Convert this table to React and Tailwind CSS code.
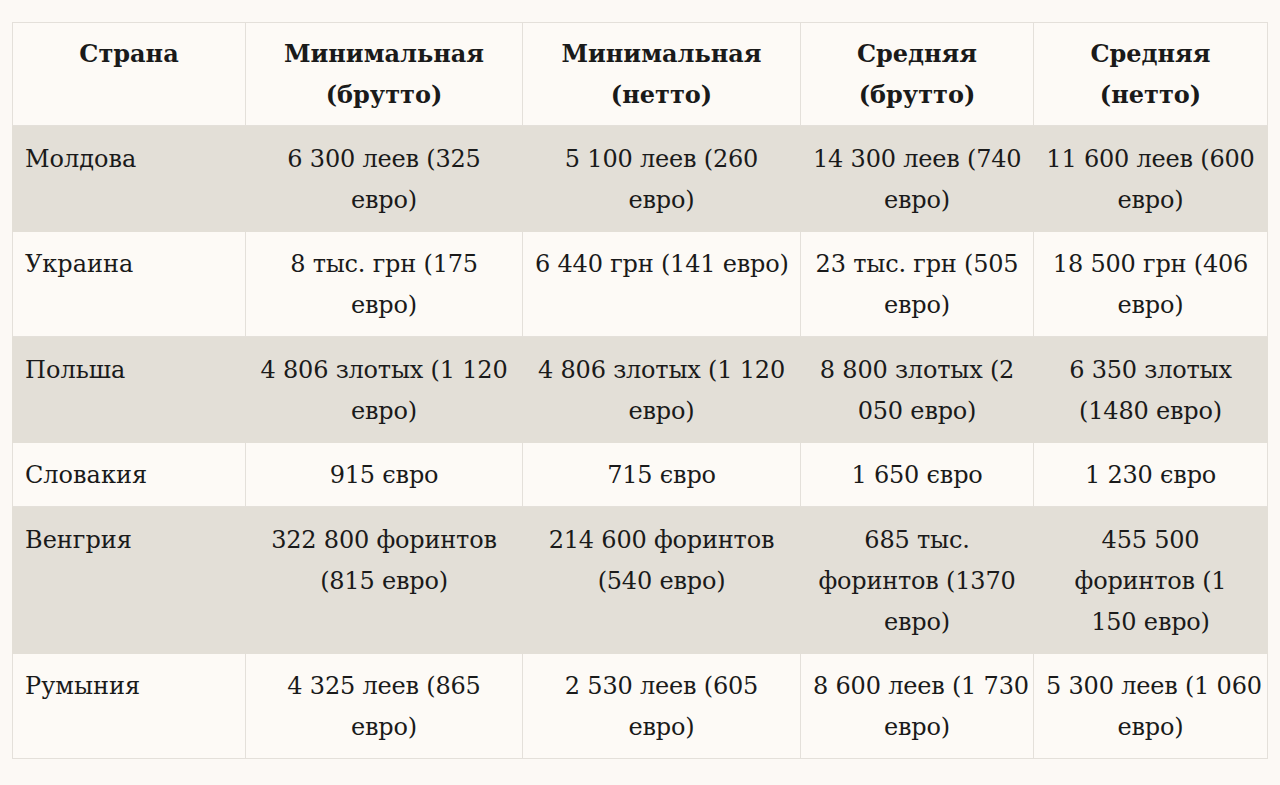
import React from 'react';

const headers = [
  ['Страна'],
  ['Минимальная', '(брутто)'],
  ['Минимальная', '(нетто)'],
  ['Средняя', '(брутто)'],
  ['Средняя', '(нетто)'],
];

const rows = [
  {
    country: 'Молдова',
    cells: [
      ['6 300 леев (325', 'евро)'],
      ['5 100 леев (260', 'евро)'],
      ['14 300 леев (740', 'евро)'],
      ['11 600 леев (600', 'евро)'],
    ],
  },
  {
    country: 'Украина',
    cells: [
      ['8 тыс. грн (175', 'евро)'],
      ['6 440 грн (141 евро)'],
      ['23 тыс. грн (505', 'евро)'],
      ['18 500 грн (406', 'евро)'],
    ],
  },
  {
    country: 'Польша',
    cells: [
      ['4 806 злотых (1 120', 'евро)'],
      ['4 806 злотых (1 120', 'евро)'],
      ['8 800 злотых (2', '050 евро)'],
      ['6 350 злотых', '(1480 евро)'],
    ],
  },
  {
    country: 'Словакия',
    cells: [['915 євро'], ['715 євро'], ['1 650 євро'], ['1 230 євро']],
  },
  {
    country: 'Венгрия',
    cells: [
      ['322 800 форинтов', '(815 евро)'],
      ['214 600 форинтов', '(540 евро)'],
      ['685 тыс.', 'форинтов (1370', 'евро)'],
      ['455 500', 'форинтов (1', '150 евро)'],
    ],
  },
  {
    country: 'Румыния',
    cells: [
      ['4 325 леев (865', 'евро)'],
      ['2 530 леев (605', 'евро)'],
      ['8 600 леев (1 730', 'евро)'],
      ['5 300 леев (1 060', 'евро)'],
    ],
  },
];

const Lines = ({ lines }) =>
  lines.map((l, i) => (
    <span key={i} className="block whitespace-nowrap">
      {l}
    </span>
  ));

export default function App() {
  return (
    <div
      className="min-h-screen w-full bg-[#fcf9f5] pt-[22px] pl-[12px] text-[#1a1a1a]"
      style={{ fontFamily: '"DejaVu Serif", "Liberation Serif", serif' }}
    >
      <table className="w-[1255px] table-fixed border-collapse border border-[#e4e0da] text-[24px] leading-[41px]">
        <colgroup>
          <col className="w-[233px]" />
          <col className="w-[277px]" />
          <col className="w-[278px]" />
          <col className="w-[233px]" />
          <col className="w-[234px]" />
        </colgroup>
        <thead>
          <tr className="bg-[#fdfaf6]">
            {headers.map((h, i) => (
              <th
                key={i}
                className="border border-[#e4e0da] px-3 py-[10px] text-center align-top font-bold"
              >
                <Lines lines={h} />
              </th>
            ))}
          </tr>
        </thead>
        <tbody>
          {rows.map((r, ri) => {
            const shaded = ri % 2 === 0;
            const cellCls = shaded
              ? 'border border-[#e3dfd7] bg-[#e3dfd7]'
              : 'border border-[#e4e0da] bg-[#fdfaf6]';
            return (
              <tr key={r.country}>
                <td className={`${cellCls} px-3 pt-[12.5px] pb-[10px] text-left align-top`}>{r.country}</td>
                {r.cells.map((c, ci) => (
                  <td key={ci} className={`${cellCls} px-3 pt-[12.5px] pb-[10px] text-center align-top tracking-[-0.2px]`}>
                    <Lines lines={c} />
                  </td>
                ))}
              </tr>
            );
          })}
        </tbody>
      </table>
    </div>
  );
}
